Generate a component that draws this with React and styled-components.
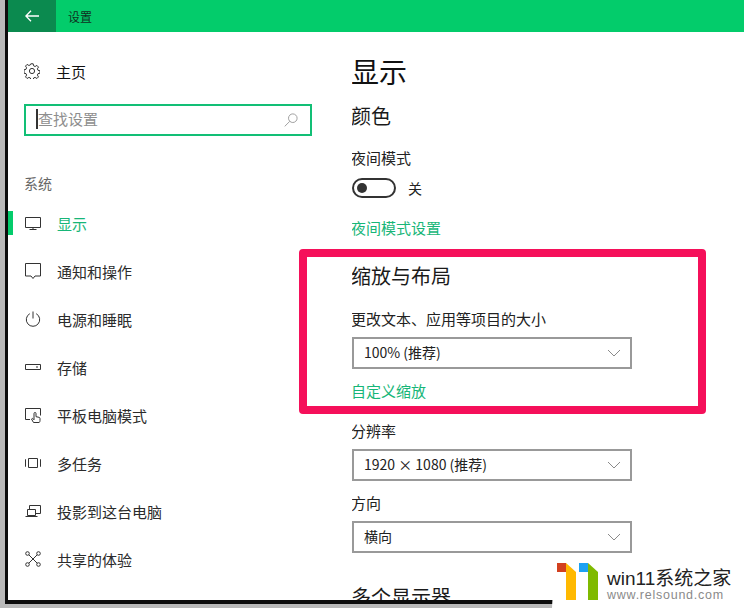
import React from "react";
import styled, { createGlobalStyle } from "styled-components";

const GlobalStyle = createGlobalStyle`
  html, body {
    margin: 0;
    padding: 0;
    background: #b9b9b9;
  }
  * {
    box-sizing: border-box;
  }
`;

const Stage = styled.div`
  position: relative;
  width: 744px;
  height: 608px;
  overflow: hidden;
  padding-left: 5px;
  font-family: "Noto Sans CJK SC", "Noto Sans", sans-serif;
  color: #1a1a1a;
`;

const Window = styled.div`
  width: 739px;
  height: 604px;
  background: #fff;
  border-left: 3px solid #0c0c0c;
  border-bottom: 4px solid #0c0c0c;
  overflow: hidden;
  display: flex;
  flex-direction: column;
`;

const TitleBar = styled.header`
  flex: 0 0 32px;
  display: flex;
  align-items: center;
  background: #03cc6b;
`;

const BackButton = styled.div`
  width: 48px;
  height: 32px;
  display: grid;
  place-items: center;
  background: #0b8a4f;
`;

const TitleText = styled.span`
  margin-left: 12px;
  font-size: 12px;
  color: #10301f;
`;

const Body = styled.div`
  flex: 1;
  min-height: 0;
  display: grid;
  grid-template-columns: 344px 1fr;
`;

const Sidebar = styled.nav`
  padding-top: 20px;
`;

const HomeRow = styled.div`
  height: 40px;
  display: flex;
  align-items: center;
  padding: 0 0 2px 16px;
  font-size: 15px;
  color: #111;
`;

const RowIcon = styled.span`
  flex: 0 0 16px;
  width: 16px;
  height: 16px;
  margin-right: 16px;
  display: block;
  color: #333;
  svg {
    display: block;
  }
`;

const SearchBox = styled.div`
  width: 288px;
  height: 32px;
  margin: 12px 0 0 16px;
  padding: 0 12px 0 11px;
  border: 2px solid #12bf76;
  display: flex;
  align-items: center;
  justify-content: space-between;
  font-size: 15px;
  color: #8e8e8e;
`;

const SearchText = styled.span`
  border-left: 2px solid #333;
  line-height: 20px;
  margin: -2px 0 0 -1px;
`;

const GroupLabel = styled.div`
  margin: 35px 0 4px 16px;
  line-height: 24px;
  font-size: 14px;
  color: #666;
`;

const NavItem = styled.div`
  height: 48px;
  display: flex;
  align-items: center;
  padding-left: 17px;
  font-size: 15px;
  color: ${(p) => (p.$active ? "#17b678" : "#2b2b2b")};
  position: relative;

  &::before {
    content: "";
    display: ${(p) => (p.$active ? "block" : "none")};
    position: absolute;
    left: 0;
    top: 12px;
    width: 5px;
    height: 24px;
    background: #03cc6b;
  }
`;

const Main = styled.main`
  padding-top: 19px;
  overflow: hidden;
`;

const PageTitle = styled.h1`
  margin: 0 0 0 -1px;
  font-size: 28px;
  font-weight: 400;
  line-height: 40px;
  color: #111;
`;

const SectionTitle = styled.h2`
  margin: ${(p) => p.$top}px 0 0 -1px;
  font-size: 20px;
  font-weight: 400;
  line-height: 28px;
  color: #1a1a1a;
`;

const Label = styled.div`
  margin: ${(p) => p.$top}px 0 0 -1px;
  font-size: 15px;
  line-height: 20px;
  color: #222;
`;

const ToggleRow = styled.div`
  margin-top: 10px;
  height: 20px;
  display: flex;
  align-items: center;
  gap: 12px;
  font-size: 14px;
  color: #222;
`;

const Toggle = styled.span`
  width: 44px;
  height: 20px;
  border: 2px solid #333;
  border-radius: 10px;
  display: flex;
  align-items: center;
  padding-left: 3px;

  &::before {
    content: "";
    width: 10px;
    height: 10px;
    border-radius: 50%;
    background: #333;
  }
`;

const LinkText = styled.div`
  margin: ${(p) => p.$top}px 0 0 -1px;
  font-size: 15px;
  line-height: 20px;
  color: #17b678;
`;

const Select = styled.div`
  width: 280px;
  height: 32px;
  margin-top: 8px;
  padding: 0 9px 0 10px;
  border: 2px solid #999;
  display: flex;
  align-items: center;
  justify-content: space-between;
  font-size: 14px;
  color: #222;
`;

const SelectText = styled.span`
  margin-top: -2px;
`;

// red frame drawn over the screenshot
const Highlight = styled.div`
  position: absolute;
  left: 299px;
  top: 249px;
  width: 407px;
  height: 165px;
  border: 8px solid #f5105a;
  border-radius: 4px;
  pointer-events: none;
`;

const Watermark = styled.div`
  position: absolute;
  right: 0;
  bottom: 0;
  width: 192px;
  height: 47px;
  padding: 1px 0 0 4px;
  display: flex;
  gap: 7px;
  background: #fff;
  border-top-left-radius: 26px 47px;
`;

const MarkText = styled.div`
  display: flex;
  flex-direction: column;
  padding-top: 7px;
`;

const MarkTitle = styled.span`
  font-size: 19px;
  line-height: 20px;
  color: #222;
  white-space: nowrap;
  font-family: "Liberation Sans", "Noto Sans CJK SC", sans-serif;
`;

const MarkUrl = styled.span`
  font-size: 12.5px;
  line-height: 12px;
  letter-spacing: 0.75px;
  color: #8a8a8a;
  white-space: nowrap;
  font-family: "Liberation Sans", sans-serif;
`;

const Glyph = ({ children, size = 16 }) => (
  <svg
    width={size}
    height={size}
    viewBox="0 0 16 16"
    fill="none"
    stroke="currentColor"
    strokeWidth="1"
  >
    {children}
  </svg>
);

const GearIcon = () => (
  <Glyph>
    <circle cx="8" cy="8" r="2.6" />
    <path d="M6.8.8h2.4l.4 2 1.5.7 1.8-1.1 1.6 1.7-1.1 1.7.6 1.5 2 .5v2.4l-2 .4-.6 1.5 1.1 1.8-1.6 1.6-1.8-1.1-1.5.6-.4 2H6.8l-.4-2-1.5-.6-1.8 1.1-1.6-1.6 1.1-1.8-.6-1.5-2-.4V6.8l2-.5.6-1.5-1.1-1.7L3.100 1.400l1.800 1.100 1.500-.7z" />
  </Glyph>
);

const MonitorIcon = () => (
  <Glyph>
    <path d="M.5 2.500h15v10H.5zM8 12.500v2M4.500 14.500h7" />
  </Glyph>
);

const BubbleIcon = () => (
  <Glyph>
    <path d="M.5.500h15v12.500H10l-2 2.500-2-2.500H.5z" />
  </Glyph>
);

const PowerIcon = () => (
  <Glyph>
    <path d="M8 .5v7" />
    <path d="M4.800 2.700a6.700 6.700 0 1 0 6.400 0" />
  </Glyph>
);

const StorageIcon = () => (
  <Glyph>
    <path d="M.5 5.500h15v5H.5z" />
    <path d="M11 8h2" />
  </Glyph>
);

const TabletIcon = () => (
  <Glyph>
    <path d="M5 12.500H.5V1.500h15v7" />
    <path d="M8.500 15.500l-2-3.500 1-.7 1.500 1.500V6.500a1 1 0 0 1 2 0v3.200l3 .6c.6.100 1 .6 1 1.200v2c0 1-.3 1.500-.8 2z" />
  </Glyph>
);

const MultitaskIcon = () => (
  <Glyph>
    <path d="M3.500 3.500h9v9h-9zM1 4.500H.5v7H1M15 4.500h.5v7H15" />
  </Glyph>
);

const ProjectIcon = () => (
  <Glyph>
    <path d="M4.500 6V2.500h11v8H11" />
    <path d="M2.500 6.500h8v6h-8zM.5 13.500h12" />
  </Glyph>
);

const ShareIcon = () => (
  <Glyph>
    <circle cx="2.500" cy="2.500" r="1.800" />
    <circle cx="13.500" cy="2.500" r="1.800" />
    <circle cx="2.500" cy="13.500" r="1.800" />
    <circle cx="13.500" cy="13.500" r="1.800" />
    <path d="M3.800 3.800l8.400 8.400M12.200 3.800l-8.400 8.400" />
  </Glyph>
);

const SearchIcon = () => (
  <svg width="14" height="14" viewBox="0 0 14 14" fill="none" stroke="#a0a0a0">
    <circle cx="8.800" cy="5.200" r="4.300" />
    <path d="M5.800 8.300L.7 13.400" />
  </svg>
);

const Chevron = () => (
  <svg width="14" height="8" viewBox="0 0 14 8" fill="none" stroke="#8a8a8a">
    <path d="M1 1l6 6 6-6" />
  </svg>
);

const BackArrow = () => (
  <svg width="14" height="12" viewBox="0 0 14 12" fill="none" stroke="#fff" strokeWidth="1.300">
    <path d="M6 .7L.9 6 6 11.300M1 6h13" />
  </svg>
);

const Logo = () => (
  <svg width="44" height="38" viewBox="0 0 44 38">
    <path fill="#d2401f" d="M1 1h9v9H1z" />
    <path fill="#ffb900" d="M10 1l10 9v28H10z" />
    <path fill="#1da1f2" d="M23 1h9v9h-9z" />
    <path fill="#7fba00" d="M32 1l10 9v28H32z" />
  </svg>
);

const navItems = [
  { label: "显示", icon: <MonitorIcon />, active: true },
  { label: "通知和操作", icon: <BubbleIcon /> },
  { label: "电源和睡眠", icon: <PowerIcon /> },
  { label: "存储", icon: <StorageIcon /> },
  { label: "平板电脑模式", icon: <TabletIcon /> },
  { label: "多任务", icon: <MultitaskIcon /> },
  { label: "投影到这台电脑", icon: <ProjectIcon /> },
  { label: "共享的体验", icon: <ShareIcon /> },
];

export default function App() {
  return (
    <Stage>
      <GlobalStyle />
      <Window>
        <TitleBar>
          <BackButton>
            <BackArrow />
          </BackButton>
          <TitleText>设置</TitleText>
        </TitleBar>
        <Body>
          <Sidebar>
            <HomeRow>
              <RowIcon>
                <GearIcon />
              </RowIcon>
              主页
            </HomeRow>
            <SearchBox>
              <SearchText>查找设置</SearchText>
              <SearchIcon />
            </SearchBox>
            <GroupLabel>系统</GroupLabel>
            {navItems.map((item) => (
              <NavItem key={item.label} $active={item.active}>
                <RowIcon>{item.icon}</RowIcon>
                {item.label}
              </NavItem>
            ))}
          </Sidebar>
          <Main>
            <PageTitle>显示</PageTitle>
            <SectionTitle $top={11}>颜色</SectionTitle>
            <Label $top={18}>夜间模式</Label>
            <ToggleRow>
              <Toggle />关
            </ToggleRow>
            <LinkText $top={20}>夜间模式设置</LinkText>
            <SectionTitle $top={24}>缩放与布局</SectionTitle>
            <Label $top={19}>更改文本、应用等项目的大小</Label>
            <Select>
              <SelectText>100% (推荐)</SelectText>
              <Chevron />
            </Select>
            <LinkText $top={12}>自定义缩放</LinkText>
            <Label $top={20}>分辨率</Label>
            <Select>
              <SelectText>1920 × 1080 (推荐)</SelectText>
              <Chevron />
            </Select>
            <Label $top={12}>方向</Label>
            <Select>
              <SelectText>横向</SelectText>
              <Chevron />
            </Select>
            <SectionTitle $top={30}>多个显示器</SectionTitle>
          </Main>
        </Body>
      </Window>
      <Highlight />
      <Watermark>
        <Logo />
        <MarkText>
          <MarkTitle>win11系统之家</MarkTitle>
          <MarkUrl>www.relsound.com</MarkUrl>
        </MarkText>
      </Watermark>
    </Stage>
  );
}
